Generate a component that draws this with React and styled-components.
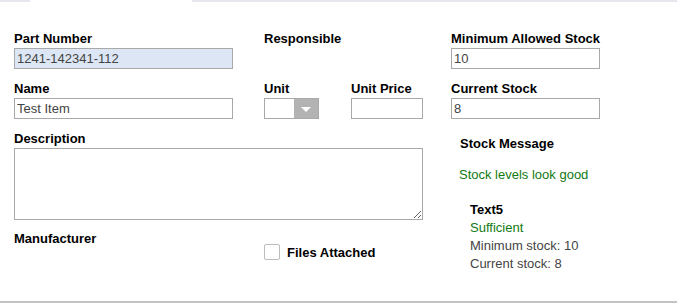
import React from "react";
import styled, { createGlobalStyle } from "styled-components";

const Global = createGlobalStyle`
  html, body { margin: 0; padding: 0; background: #fff; }
  body { font-family: "Liberation Sans", Arial, sans-serif; font-size: 13px; color: #000; }
  * { box-sizing: border-box; }
`;

const Page = styled.div`
  width: 677px;
  height: 303px;
  display: flex;
  flex-direction: column;
  overflow: hidden;
`;

const TabStrip = styled.div`
  height: 2px;
  display: flex;
  flex: none;
`;

const TabSeg = styled.div`
  width: ${(p) => (p.$w ? `${p.$w}px` : "auto")};
  flex: ${(p) => (p.$w ? "none" : "1")};
  background: ${(p) => (p.$active ? "#fff" : "#e6e6ee")};
`;

const Body = styled.div`
  flex: 1;
  border-bottom: 2px solid #c3c3c3;
  padding: 28px 0 0 14px;
`;

const Grid = styled.div`
  display: grid;
  grid-template-columns: 250px 87px 100px 1fr;
  grid-template-rows: 39px 39px 89px auto;
  row-gap: 11px;
  align-items: start;
`;

const Field = styled.div`
  display: flex;
  flex-direction: column;
  grid-column: ${(p) => p.$col || "auto"};
  grid-row: ${(p) => p.$row || "auto"};
`;

const Label = styled.label`
  display: block;
  font-weight: bold;
  font-size: 13px;
  line-height: 15px;
  height: 15px;
  margin: 1px 0 2px;
  white-space: nowrap;
`;

const TextInput = styled.input`
  width: ${(p) => p.$w}px;
  height: 21px;
  border: 1px solid #a9a9a9;
  border-radius: 0;
  background: ${(p) => (p.$tint ? "#dce6f4" : "#fff")};
  font-family: "Liberation Sans", Arial, sans-serif;
  font-size: 13px;
  color: #444;
  padding: 0 2px;
  margin: 0;
  outline: none;
`;

const Select = styled.div`
  width: 55px;
  height: 21px;
  border: 1px solid #a9a9a9;
  display: flex;
  background: #fff;
`;

const SelectValue = styled.div`
  flex: 1;
`;

const SelectButton = styled.div`
  width: 24px;
  background: #b3b3b3;
  display: flex;
  align-items: center;
  justify-content: center;
`;

const Caret = styled.div`
  width: 0;
  height: 0;
  border-left: 5px solid transparent;
  border-right: 5px solid transparent;
  border-top: 5px solid #fff;
  margin-top: 1px;
`;

const TextArea = styled.textarea`
  width: 409px;
  height: 72px;
  border: 1px solid #a9a9a9;
  border-radius: 0;
  font-family: "Liberation Sans", Arial, sans-serif;
  font-size: 13px;
  color: #444;
  padding: 2px;
  margin: 0;
  resize: vertical;
  outline: none;
  display: block;
`;

const StockPanel = styled.div`
  grid-column: 4;
  grid-row: 3 / span 2;
  padding: 6px 0 0 8px;
`;

const PanelTitle = styled.div`
  font-weight: bold;
  line-height: 15px;
  padding-left: 1px;
`;

const StatusLine = styled.div`
  color: #127a12;
  line-height: 15px;
  margin-top: 16px;
`;

const Detail = styled.div`
  margin-top: 19px;
  padding-left: 11px;
  line-height: 18px;
`;

const DetailLine = styled.div`
  font-weight: ${(p) => (p.$bold ? "bold" : "normal")};
  color: ${(p) => p.$color || "#444"};
`;

const CheckRow = styled.label`
  grid-column: 2 / span 2;
  grid-row: 4;
  display: flex;
  align-items: center;
  gap: 7px;
  padding-top: 14px;
  font-weight: bold;
  line-height: 15px;
  white-space: nowrap;
`;

const Box = styled.span`
  width: 16px;
  height: 16px;
  border: 1px solid #bdbdbd;
  border-radius: 2px;
  background: #fff;
  display: inline-block;
`;

export default function App() {
  return (
    <>
      <Global />
      <Page>
        <TabStrip>
          <TabSeg $w={30} />
          <TabSeg $w={162} $active />
          <TabSeg />
        </TabStrip>
        <Body>
          <Grid>
            <Field $col="1" $row="1">
              <Label>Part Number</Label>
              <TextInput $w={219} $tint readOnly value="1241-142341-112" />
            </Field>
            <Field $col="2 / span 2" $row="1">
              <Label>Responsible</Label>
            </Field>
            <Field $col="4" $row="1">
              <Label>Minimum Allowed Stock</Label>
              <TextInput $w={149} readOnly value="10" />
            </Field>

            <Field $col="1" $row="2">
              <Label>Name</Label>
              <TextInput $w={219} readOnly value="Test Item" />
            </Field>
            <Field $col="2" $row="2">
              <Label>Unit</Label>
              <Select>
                <SelectValue />
                <SelectButton>
                  <Caret />
                </SelectButton>
              </Select>
            </Field>
            <Field $col="3" $row="2">
              <Label>Unit Price</Label>
              <TextInput $w={72} readOnly value="" />
            </Field>
            <Field $col="4" $row="2">
              <Label>Current Stock</Label>
              <TextInput $w={149} readOnly value="8" />
            </Field>

            <Field $col="1 / span 3" $row="3">
              <Label>Description</Label>
              <TextArea readOnly value="" />
            </Field>
            <StockPanel>
              <PanelTitle>Stock Message</PanelTitle>
              <StatusLine>Stock levels look good</StatusLine>
              <Detail>
                <DetailLine $bold $color="#000">Text5</DetailLine>
                <DetailLine $color="#127a12">Sufficient</DetailLine>
                <DetailLine>Minimum stock: 10</DetailLine>
                <DetailLine>Current stock: 8</DetailLine>
              </Detail>
            </StockPanel>

            <Field $col="1" $row="4">
              <Label>Manufacturer</Label>
            </Field>
            <CheckRow>
              <Box />
              Files Attached
            </CheckRow>
          </Grid>
        </Body>
      </Page>
    </>
  );
}
